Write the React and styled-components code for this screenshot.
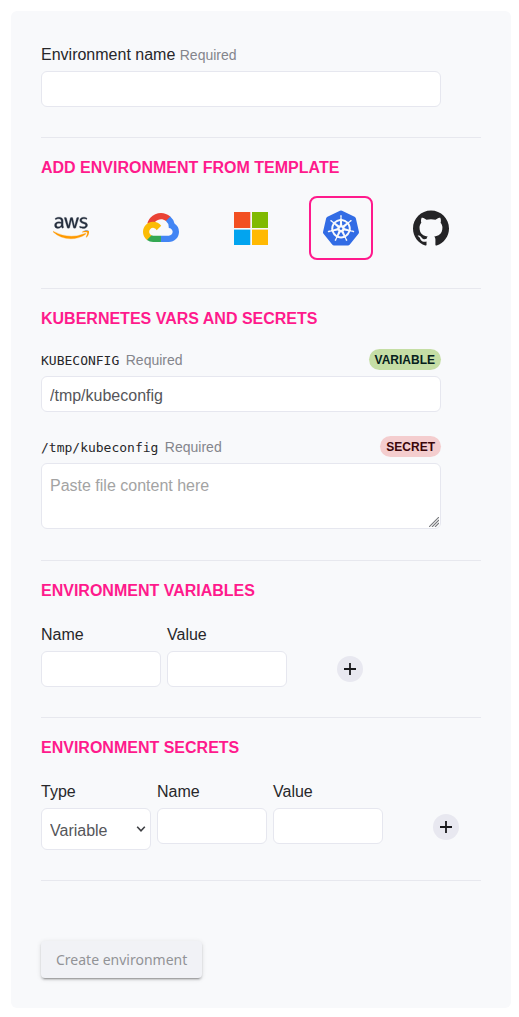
import React, { useState } from "react";
import styled, { createGlobalStyle, css } from "styled-components";
import { FaAws } from "react-icons/fa";
import { SiKubernetes, SiGithub } from "react-icons/si";

const GlobalStyle = createGlobalStyle`
  *, *::before, *::after { box-sizing: border-box; }
  body {
    margin: 0;
    background: #fff;
    color: #27272a;
    font-family: "Liberation Sans", Arial, sans-serif;
    font-size: 16px;
  }
`;

const Panel = styled.form`
  margin: 11px 8px 9px 11px;
  padding: 30px;
  border-radius: 6px;
  background: #f8f9fb;
`;

const Section = styled.section`
  padding: ${(p) => (p.$first ? "0" : "20px")} 0 30px;
  border-bottom: 1px solid #e7e8ee;
`;

const TemplateSection = styled(Section)`
  padding-bottom: 28px;
`;

const FileSection = styled(Section)`
  padding-bottom: 31px;
`;

const Heading = styled.h2`
  margin: 0;
  color: #ff1a8c;
  font-size: 16px;
  font-weight: 700;
  line-height: 20px;
  text-transform: uppercase;
`;

const Field = styled.div`
  width: ${(p) => p.$width || 400}px;
  max-width: 100%;
`;

const FieldStack = styled.div`
  display: flex;
  flex-direction: column;
  gap: 21px;
  padding-top: 17px;
`;

const LabelRow = styled.div`
  display: flex;
  align-items: center;
  justify-content: space-between;
  height: 26px;
  margin-bottom: 4px;
`;

const Label = styled.label`
  padding-top: 2px;
  line-height: 24px;
  white-space: nowrap;
`;

const Code = styled.code`
  margin-right: 2px;
  font-family: "DejaVu Sans Mono", monospace;
  font-size: 13px;
`;

const Required = styled.span`
  color: #84858c;
  font-size: 14px;
`;

const Pill = styled.span`
  padding: 1px 6px 0;
  border-radius: 11px;
  font-size: 12px;
  font-weight: 700;
  line-height: 20px;
  text-transform: uppercase;
  ${(p) =>
    p.$kind === "secret"
      ? css`
          background: #f4cdce;
          color: #3b0609;
        `
      : css`
          background: #c5dea5;
          color: #06201c;
        `}
`;

const control = css`
  display: block;
  width: 100%;
  border: 1px solid #e6e7ef;
  border-radius: 6px;
  background: #fff;
  color: #55565a;
  font-family: inherit;
  font-size: 16px;
`;

const Input = styled.input`
  ${control}
  height: 36px;
  padding: 3px 8px 0;
`;

const TextAreaBox = styled.div`
  display: grid;
  & > * { grid-area: 1 / 1; }
  & > svg {
    place-self: end;
    margin: 0 2px 2px 0;
    color: #77787c;
    pointer-events: none;
  }
`;

const TextArea = styled.textarea`
  ${control}
  height: 66px;
  padding: 12px 8px;
  line-height: 20px;
  resize: vertical;
  &::placeholder { color: #a3a3a3; }
  &::-webkit-resizer { background: transparent; }
`;

const SelectBox = styled.div`
  display: grid;
  align-items: center;
  & > * { grid-area: 1 / 1; }
  & > svg {
    justify-self: end;
    margin-right: 5px;
    color: #3f4044;
    pointer-events: none;
  }
`;

const Select = styled.select`
  ${control}
  appearance: none;
  height: 42px;
  padding: 2px 8px 0;
`;

const Templates = styled.div`
  display: flex;
  gap: 26px;
  margin-left: -2px;
  padding-top: 18px;
`;

const Template = styled.button`
  display: flex;
  align-items: center;
  justify-content: center;
  width: 64px;
  height: 64px;
  padding: 0;
  border: 2px solid ${(p) => (p.$selected ? "#ff1a8c" : "transparent")};
  border-radius: 8px;
  background: none;
  cursor: pointer;
`;

const Row = styled.div`
  display: flex;
  gap: 6px;
  padding-top: 20px;
`;

const AddButton = styled.button`
  display: flex;
  align-items: center;
  justify-content: center;
  width: 26px;
  height: 26px;
  margin: ${(p) => p.$top || 35}px 0 0 44px;
  padding: 0;
  border: 0;
  border-radius: 50%;
  background: #e8e8f0;
  color: #18181b;
`;

const Submit = styled.button`
  margin-top: 60px;
  height: 37px;
  padding: 0 15px;
  display: block;
  border: 0;
  border-radius: 4px;
  background: #f1f2f6;
  color: #929397;
  font-family: "Noto Sans", sans-serif;
  font-size: 14px;
  font-weight: 400;
  box-shadow: 0 3px 1px -2px rgba(0, 0, 0, 0.2), 0 2px 2px rgba(0, 0, 0, 0.14),
    0 1px 5px rgba(0, 0, 0, 0.12);
`;

const AwsLogo = () => (
  <>
    <svg width="0" height="0" aria-hidden="true">
      <linearGradient id="aws-tone" gradientUnits="userSpaceOnUse" x1="0" y1="0" x2="0" y2="512">
        <stop offset="0.6" stopColor="#252f3e" />
        <stop offset="0.6" stopColor="#ff9900" />
      </linearGradient>
    </svg>
    <FaAws size={36} fill="url(#aws-tone)" stroke="url(#aws-tone)" strokeWidth={5} />
  </>
);

const GoogleCloudLogo = () => (
  <svg width="36" height="30" viewBox="0 0 256 213" aria-hidden="true">
    <path fill="#EA4335" d="M170.25 56.82l22.25-22.25 1.49-9.37C153.44-11.68 88.98-7.5 52.42 33.92 42.27 45.42 34.73 59.76 30.72 74.57l7.97-1.12 44.5-7.34 3.44-3.51c19.8-21.74 53.27-24.67 76.13-6.17l7.49.39z" />
    <path fill="#4285F4" d="M224.2 73.92a100.25 100.25 0 0 0-30.21-48.72l-31.23 31.23a55.52 55.52 0 0 1 20.38 44.04v5.54c15.35 0 27.8 12.45 27.8 27.8 0 15.35-12.45 27.48-27.8 27.48h-55.67l-5.47 5.93v33.34l5.47 5.24h55.67c39.93.31 72.55-31.5 72.86-71.43a72.3 72.3 0 0 0-31.8-60.45" />
    <path fill="#34A853" d="M71.87 205.8h55.59v-44.51H71.87a27.6 27.6 0 0 1-11.48-2.5l-8.01 2.46-22.31 22.25-1.94 7.53a72.3 72.3 0 0 0 43.74 14.77" />
    <path fill="#FBBC05" d="M71.87 61.43C31.94 61.66-.24 94.23 0 134.16a72.3 72.3 0 0 0 28.26 56.81l32.25-32.25a27.8 27.8 0 1 1 36.77-36.77l32.25-32.25a72.24 72.24 0 0 0-57.66-28.27" />
  </svg>
);

const MicrosoftLogo = () => (
  <svg width="34" height="34" viewBox="0 0 34 34" aria-hidden="true">
    <path fill="#f25022" d="M0 1h16.3v16H0z" />
    <path fill="#80ba01" d="M18 1h16v16H18z" />
    <path fill="#02a4ef" d="M0 18.6h16.3V34H0z" />
    <path fill="#ffb902" d="M18 18.6h16V34H18z" />
  </svg>
);

const PlusIcon = () => (
  <svg width="12" height="12" viewBox="0 0 12 12" aria-hidden="true">
    <path d="M6 0v12M0 6h12" stroke="currentColor" strokeWidth="1.8" />
  </svg>
);

const ChevronIcon = () => (
  <svg width="10" height="8" viewBox="0 0 10 8" fill="none" aria-hidden="true">
    <path d="M1.2 1.8L5 5.8l3.8-4" stroke="currentColor" strokeWidth="1.6" />
  </svg>
);

const GripIcon = () => (
  <svg width="10" height="10" viewBox="0 0 10 10" aria-hidden="true">
    <path d="M0 10L10 0M3 10l7-7M6 10l4-4" stroke="currentColor" strokeWidth="1.1" />
  </svg>
);

const templates = [
  { name: "AWS", logo: <AwsLogo /> },
  { name: "Google Cloud", logo: <GoogleCloudLogo /> },
  { name: "Microsoft", logo: <MicrosoftLogo /> },
  { name: "Kubernetes", logo: <SiKubernetes size={36} color="#326ce5" /> },
  { name: "GitHub", logo: <SiGithub size={36} color="#242426" /> },
];

function TextField({ id, label, width }) {
  return (
    <Field $width={width}>
      <LabelRow>
        <Label htmlFor={id}>{label}</Label>
      </LabelRow>
      <Input id={id} type="text" />
    </Field>
  );
}

export default function App() {
  const [selected, setSelected] = useState("Kubernetes");

  return (
    <>
      <GlobalStyle />
      <Panel onSubmit={(e) => e.preventDefault()}>
        <Section $first>
          <Field>
            <LabelRow>
              <Label htmlFor="env-name">
                Environment name <Required>Required</Required>
              </Label>
            </LabelRow>
            <Input id="env-name" type="text" />
          </Field>
        </Section>

        <TemplateSection>
          <Heading>Add environment from template</Heading>
          <Templates>
            {templates.map((t) => (
              <Template
                key={t.name}
                type="button"
                aria-label={t.name}
                aria-pressed={selected === t.name}
                $selected={selected === t.name}
                onClick={() => setSelected(t.name)}
              >
                {t.logo}
              </Template>
            ))}
          </Templates>
        </TemplateSection>

        <FileSection>
          <Heading>Kubernetes vars and secrets</Heading>
          <FieldStack>
            <Field>
              <LabelRow>
                <Label htmlFor="kubeconfig">
                  <Code>KUBECONFIG</Code> <Required>Required</Required>
                </Label>
                <Pill>Variable</Pill>
              </LabelRow>
              <Input id="kubeconfig" type="text" defaultValue="/tmp/kubeconfig" />
            </Field>
            <Field>
              <LabelRow>
                <Label htmlFor="kubeconfig-file">
                  <Code>/tmp/kubeconfig</Code> <Required>Required</Required>
                </Label>
                <Pill $kind="secret">Secret</Pill>
              </LabelRow>
              <TextAreaBox>
                <TextArea id="kubeconfig-file" placeholder="Paste file content here" />
                <GripIcon />
              </TextAreaBox>
            </Field>
          </FieldStack>
        </FileSection>

        <Section>
          <Heading>Environment variables</Heading>
          <Row>
            <TextField id="var-name" label="Name" width={120} />
            <TextField id="var-value" label="Value" width={120} />
            <AddButton type="button" aria-label="Add variable">
              <PlusIcon />
            </AddButton>
          </Row>
        </Section>

        <Section>
          <Heading>Environment secrets</Heading>
          <Row>
            <Field $width={110}>
              <LabelRow>
                <Label htmlFor="secret-type">Type</Label>
              </LabelRow>
              <SelectBox>
                <Select id="secret-type" defaultValue="Variable">
                  <option>Variable</option>
                  <option>File</option>
                </Select>
                <ChevronIcon />
              </SelectBox>
            </Field>
            <TextField id="secret-name" label="Name" width={110} />
            <TextField id="secret-value" label="Value" width={110} />
            <AddButton $top={36} type="button" aria-label="Add secret">
              <PlusIcon />
            </AddButton>
          </Row>
        </Section>

        <Submit type="submit" disabled>
          Create environment
        </Submit>
      </Panel>
    </>
  );
}
